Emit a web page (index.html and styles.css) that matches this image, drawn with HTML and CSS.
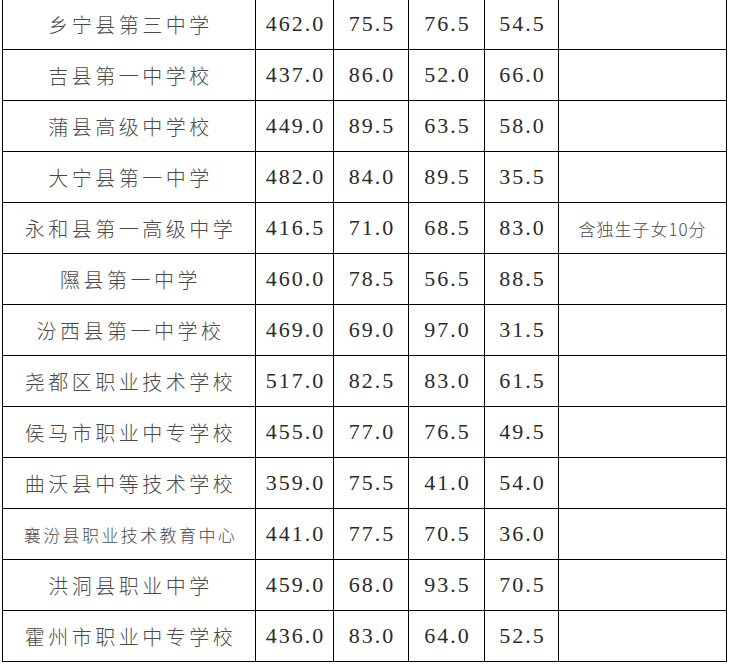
FILE: index.html
```html
<!DOCTYPE html>
<html lang="zh">
<head>
<meta charset="utf-8">
<link rel="stylesheet" href="styles.css">
</head>
<body>
<table class="scores">
  <colgroup>
    <col class="c-name"><col class="c-n1"><col class="c-n2"><col class="c-n3"><col class="c-n4"><col class="c-note">
  </colgroup>
  <tbody>
    <tr><td class="name">乡宁县第三中学</td><td class="num">462.0</td><td class="num">75.5</td><td class="num">76.5</td><td class="num">54.5</td><td class="note"></td></tr>
    <tr><td class="name">吉县第一中学校</td><td class="num">437.0</td><td class="num">86.0</td><td class="num">52.0</td><td class="num">66.0</td><td class="note"></td></tr>
    <tr><td class="name">蒲县高级中学校</td><td class="num">449.0</td><td class="num">89.5</td><td class="num">63.5</td><td class="num">58.0</td><td class="note"></td></tr>
    <tr><td class="name">大宁县第一中学</td><td class="num">482.0</td><td class="num">84.0</td><td class="num">89.5</td><td class="num">35.5</td><td class="note"></td></tr>
    <tr><td class="name">永和县第一高级中学</td><td class="num">416.5</td><td class="num">71.0</td><td class="num">68.5</td><td class="num">83.0</td><td class="note">含独生子女10分</td></tr>
    <tr><td class="name">隰县第一中学</td><td class="num">460.0</td><td class="num">78.5</td><td class="num">56.5</td><td class="num">88.5</td><td class="note"></td></tr>
    <tr><td class="name">汾西县第一中学校</td><td class="num">469.0</td><td class="num">69.0</td><td class="num">97.0</td><td class="num">31.5</td><td class="note"></td></tr>
    <tr><td class="name">尧都区职业技术学校</td><td class="num">517.0</td><td class="num">82.5</td><td class="num">83.0</td><td class="num">61.5</td><td class="note"></td></tr>
    <tr><td class="name">侯马市职业中专学校</td><td class="num">455.0</td><td class="num">77.0</td><td class="num">76.5</td><td class="num">49.5</td><td class="note"></td></tr>
    <tr><td class="name">曲沃县中等技术学校</td><td class="num">359.0</td><td class="num">75.5</td><td class="num">41.0</td><td class="num">54.0</td><td class="note"></td></tr>
    <tr><td class="name small">襄汾县职业技术教育中心</td><td class="num">441.0</td><td class="num">77.5</td><td class="num">70.5</td><td class="num">36.0</td><td class="note"></td></tr>
    <tr><td class="name">洪洞县职业中学</td><td class="num">459.0</td><td class="num">68.0</td><td class="num">93.5</td><td class="num">70.5</td><td class="note"></td></tr>
    <tr><td class="name">霍州市职业中专学校</td><td class="num">436.0</td><td class="num">83.0</td><td class="num">64.0</td><td class="num">52.5</td><td class="note"></td></tr>
  </tbody>
</table>
</body>
</html>
```
FILE: styles.css
```css
html, body {
  margin: 0;
  padding: 0;
  background: #ffffff;
}
.scores {
  margin: -2px 0 0 2px;
  border-collapse: collapse;
  table-layout: fixed;
  width: 725px;
}
.c-name { width: 253px; }
.c-n1 { width: 78px; }
.c-n2 { width: 75px; }
.c-n3 { width: 76px; }
.c-n4 { width: 74px; }
.c-note { width: 168px; }
.scores td {
  border: 1px solid #000;
  height: 50px;
  padding: 0;
  text-align: center;
  vertical-align: middle;
  white-space: nowrap;
  overflow: hidden;
}
.name {
  font-family: "Noto Sans CJK SC", sans-serif;
  font-weight: 300;
  font-size: 20px;
  letter-spacing: 3.5px;
  color: #4a4a4a;
  text-indent: 3px;
}
.name.small {
  font-size: 17px;
  letter-spacing: 2.4px;
}
.num {
  font-family: "Liberation Serif", serif;
  font-size: 22px;
  letter-spacing: 2px;
  color: #2a2a2a;
  text-indent: 2px;
}
.note {
  font-family: "Noto Sans CJK SC", sans-serif;
  font-weight: 300;
  font-size: 17px;
  letter-spacing: 1px;
  color: #4a4a4a;
}
```
